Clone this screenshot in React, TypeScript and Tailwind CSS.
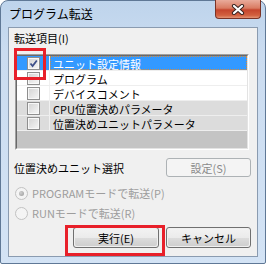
import React from "react";

const items = [
  { label: "ユニット設定情報", checked: true, selected: true, gray: false },
  { label: "プログラム", checked: false, selected: false, gray: false },
  { label: "デバイスコメント", checked: false, selected: false, gray: false },
  { label: "CPU位置決めパラメータ", checked: false, selected: false, gray: true },
  { label: "位置決めユニットパラメータ", checked: false, selected: false, gray: true },
];

const CheckBox = ({ checked }: { checked: boolean }) => (
  <div className="flex h-[13px] w-[13px] items-center justify-center border border-[#8f8f8f] bg-[#f4f4f4]">
    <div className="relative h-[11px] w-[11px] border border-[#f8f8f8] bg-[linear-gradient(135deg,#d6d6d6,#f4f4f4)]">
      {checked && (
        <svg className="absolute left-0 top-0" width="9" height="9" viewBox="0 0 9 9">
          <path d="M1.5 4.5 L3.6 7 L7.8 1.5" fill="none" stroke="#3d4f89" strokeWidth="1.8" />
        </svg>
      )}
    </div>
  </div>
);

const Radio = ({ checked }: { checked: boolean }) => (
  <div className="flex h-[13px] w-[13px] items-center justify-center rounded-full border border-[#c2c2c2] bg-[#f4f4f4]">
    {checked && <div className="h-[5px] w-[5px] rounded-full bg-[radial-gradient(circle_at_35%_35%,#d0d0d0,#9a9a9a)]" />}
  </div>
);

const Button = ({ children, width }: { children: React.ReactNode; width: string }) => (
  <div className={`${width} h-[21px] rounded-[3px] border border-[#707070] p-px`}>
    <div className="flex h-full items-center justify-center rounded-[2px] bg-[linear-gradient(to_bottom,#f2f2f2,#ebebeb_50%,#dddddd_50%,#cfcfcf)] text-[11px] leading-[14px] text-black">
      {children}
    </div>
  </div>
);

const CloseButton = () => (
  <div className="-mr-[3px] -mt-px flex h-[19px] w-[46px] items-center justify-center rounded-b-[4px] border border-t-0 border-[#7a3326] bg-[linear-gradient(to_bottom,#e9ab9b,#d97b62_45%,#c5452d_55%,#d2603f_85%,#e39475)]">
    <svg width="14" height="11" viewBox="0 0 14 11">
      <path d="M3 2 L11 9 M11 2 L3 9" stroke="#3a2420" strokeWidth="4.2" strokeLinecap="round" />
      <path d="M3 2 L11 9 M11 2 L3 9" stroke="#ffffff" strokeWidth="2.2" strokeLinecap="round" />
    </svg>
  </div>
);

const App = () => {
  return (
    <div className="relative h-[264px] w-[266px] bg-white font-['Noto_Sans_CJK_JP','Noto_Sans',sans-serif]">
      <div className="flex h-full flex-col rounded-t-[8px] rounded-b-[2px] border border-[#5f7896] bg-[linear-gradient(to_bottom,#bed4ec,#cbdcf0_20%,#d3e3f5)] px-[7px] pb-[6px]">
        <div className="flex h-[26px] items-start justify-between">
          <span className="pl-px pt-[5px] text-[12px] leading-[16px] text-black">プログラム転送</span>
          <CloseButton />
        </div>

        <div className="flex flex-1 flex-col border border-[#8a9bb0] bg-[#f0f0f0] text-[11px] leading-[14px] text-black">
          <div className="pl-[5px] pt-[3px]">転送項目(I)</div>

          <div className="ml-[6px] mt-[9px] h-[96px] w-[234px] border border-[#a0a0a0] border-b-white border-r-white">
            <div className="flex h-full flex-col border border-[#696969] border-b-[#e3e3e3] border-r-[#e3e3e3]">
              {items.map((item) => (
                <div
                  key={item.label}
                  className={`flex h-[15px] border-b border-[#eeeeee] ${
                    item.selected ? "bg-[#3399ff]" : item.gray ? "bg-[#dcdcdc]" : "bg-white"
                  }`}
                >
                  <div className="flex w-[32px] items-center pl-[10px]">
                    <CheckBox checked={item.checked} />
                  </div>
                  <div className="w-px bg-[#f0f0f0]" />
                  <div
                    className={`flex-1 whitespace-nowrap pl-[2px] ${
                      item.selected ? "border border-dotted border-[#d88b3a] text-white" : "border border-transparent"
                    }`}
                  >
                    {item.label}
                  </div>
                </div>
              ))}
              <div className="flex-1 bg-[#c4c4c4]" />
            </div>
          </div>

          <div className="mt-[8px] flex items-center justify-between pl-[5px] pr-[6px]">
            <span>位置決めユニット選択</span>
            <div className="flex h-[19px] w-[85px] items-center justify-center rounded-[3px] border border-[#adb2b5] bg-[#f4f4f4] text-[#8a8a8a]">
              設定(S)
            </div>
          </div>

          <div className="mt-[9px] flex flex-col gap-[6px] pl-[6px] text-[#9d9d9d]">
            <div className="flex h-[14px] items-center gap-[4px]">
              <Radio checked />
              <span>PROGRAMモードで転送(P)</span>
            </div>
            <div className="flex h-[14px] items-center gap-[4px]">
              <Radio checked={false} />
              <span>RUNモードで転送(R)</span>
            </div>
          </div>

          <div className="mt-[7px] flex justify-end gap-[7px] pr-[6px]">
            <Button width="w-[86px]">実行(E)</Button>
            <Button width="w-[85px]">キャンセル</Button>
          </div>
        </div>
      </div>

      <div className="absolute left-[14px] top-[48px] h-[32px] w-[32px] border-[3px] border-[#e8202a]" />
      <div className="absolute left-[65px] top-[225px] h-[31px] w-[100px] border-[3px] border-[#e8202a]" />
    </div>
  );
};

export default App;
